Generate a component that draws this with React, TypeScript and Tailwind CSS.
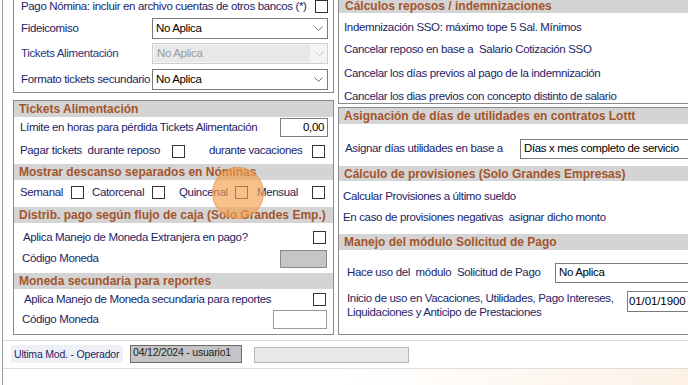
import React from "react";

const font = { fontFamily: '"Liberation Sans", Arial, sans-serif' };

function Check({ className = "" }: { className?: string }) {
  return <div className={`w-[13px] h-[13px] border border-[#333] bg-white shrink-0 ${className}`}></div>;
}

function Chevron({ muted = false }: { muted?: boolean }) {
  return (
    <svg width="9" height="6" viewBox="0 0 9 6" className="shrink-0">
      <polyline points="0.5,0.5 4.5,4.5 8.5,0.5" fill="none" stroke={muted ? "#c4c4c4" : "#707070"} strokeWidth="1" />
    </svg>
  );
}

function Select({ value, disabled = false, className = "" }: { value: string; disabled?: boolean; className?: string }) {
  if (disabled) {
    return (
      <div className={`h-[21px] flex items-stretch border border-[#cfcfcf] bg-[#f4f4f4] text-[#9c9c9c] ${className}`}>
        <span className="flex-1 flex items-center pl-[3px] bg-[#e8e8e8] m-[1px]">{value}</span>
        <span className="w-[16px] flex items-center justify-center">
          <Chevron muted />
        </span>
      </div>
    );
  }
  return (
    <div className={`h-[21px] flex items-center justify-between pl-[3px] pr-[4px] border border-[#7a7a7a] bg-white text-black ${className}`}>
      <span>{value}</span>
      <Chevron />
    </div>
  );
}

function Header({ title, className = "" }: { title: string; className?: string }) {
  return (
    <div className={`bg-[#d4d4d4] flex items-center pl-[5px] text-[12px] font-bold tracking-normal text-[#a4552c] ${className}`}>
      {title}
    </div>
  );
}

export default function App() {
  return (
    <div
      style={font}
      className="w-[688px] h-[385px] overflow-hidden bg-white relative text-[11.5px] tracking-[-0.35px] whitespace-nowrap text-[#1c2466] leading-none"
    >
      <div className="ml-[2px] h-full border-l border-[#9a9a9a] flex flex-col">
        <div className="flex pl-[10px] gap-[4px]">
          {/* Left column */}
          <div className="w-[321px] flex flex-col shrink-0">
            {/* Payroll options */}
            <div className="border-x border-b border-[#8a8a8a] pl-[7px] pr-[5px] pb-[2px] flex flex-col">
              <div className="h-[13px] flex items-center justify-between">
                <span>Pago Nómina: incluir en archivo cuentas de otros bancos (*)</span>
                <Check />
              </div>
              <div className="mt-[5px] h-[21px] flex items-center">
                <span className="w-[131px]">Fideicomiso</span>
                <Select value="No Aplica" className="w-[176px]" />
              </div>
              <div className="mt-[4px] h-[21px] flex items-center">
                <span className="w-[131px] text-[#2a3375]">Tickets Alimentación</span>
                <Select value="No Aplica" disabled className="w-[176px]" />
              </div>
              <div className="mt-[5px] h-[21px] flex items-center">
                <span className="w-[131px]">Formato tickets secundario</span>
                <Select value="No Aplica" className="w-[176px]" />
              </div>
            </div>

            {/* Tickets / descanso / moneda */}
            <div className="mt-[7px] border border-[#8a8a8a] pb-[5px] flex flex-col">
              <Header title="Tickets Alimentación" className="h-[16px]" />
              <div className="mt-[1px] h-[19px] flex items-center justify-between pl-[6px] pr-[5px]">
                <span>Límite en horas para pérdida Tickets Alimentación</span>
                <div className="w-[48px] h-[19px] border border-[#7a7a7a] bg-white text-black flex items-center justify-end pr-[3px]">0,00</div>
              </div>
              <div className="mt-[7px] h-[14px] flex items-center pl-[6px] pr-[7px]">
                <span className="w-[152px]">Pagar tickets&nbsp; durante reposo</span>
                <Check />
                <span className="ml-[24px] w-[103px]">durante vacaciones</span>
                <Check />
              </div>
              <Header title="Mostrar descanso separados en Nóminas" className="mt-[6px] h-[16px]" />
              <div className="mt-[6px] h-[13px] flex items-center pl-[6px] pr-[7px]">
                <span className="w-[51px]">Semanal</span>
                <Check />
                <span className="ml-[8px] w-[60px]">Catorcenal</span>
                <Check />
                <span className="ml-[14px] w-[56px]">Quincenal</span>
                <Check />
                <span className="ml-[9px] w-[55px]">Mensual</span>
                <Check />
              </div>
              <Header title="Distrib. pago según flujo de caja (Solo Grandes Emp.)" className="mt-[8px] h-[16px]" />
              <div className="mt-[8px] h-[13px] flex items-center justify-between pl-[9px] pr-[7px]">
                <span>Aplica Manejo de Moneda Extranjera en pago?</span>
                <Check />
              </div>
              <div className="mt-[6px] h-[18px] flex items-center justify-between pl-[8px] pr-[6px]">
                <span>Código Moneda</span>
                <div className="w-[47px] h-[18px] border border-[#8a8a8a] bg-[#c6c6c6]"></div>
              </div>
              <Header title="Moneda secundaria para reportes" className="mt-[5px] h-[16px]" />
              <div className="mt-[4px] h-[13px] flex items-center justify-between pl-[10px] pr-[7px]">
                <span>Aplica Manejo de Moneda secundaria para reportes</span>
                <Check />
              </div>
              <div className="mt-[4px] h-[19px] flex items-center justify-between pl-[8px] pr-[6px]">
                <span>Código Moneda</span>
                <div className="w-[54px] h-[19px] border border-[#9a9a9a] bg-white"></div>
              </div>
            </div>
          </div>

          {/* Right column */}
          <div className="w-[400px] flex flex-col shrink-0">
            <div className="border-x border-b border-[#8a8a8a] flex flex-col">
              <div className="bg-[#d4d4d4] h-[13px] pl-[6px] text-[12px] font-bold tracking-normal text-[#a4552c] leading-[12px]">
                Cálculos reposos / indemnizaciones
              </div>
              <div className="mt-[8px] h-[14px] flex items-center pl-[5px]">Indemnización SSO: máximo tope 5 Sal. Mínimos</div>
              <div className="mt-[8px] h-[14px] flex items-center pl-[5px]">Cancelar reposo en base a&nbsp; Salario Cotización SSO</div>
              <div className="mt-[10px] h-[14px] flex items-center pl-[5px]">Cancelar los días previos al pago de la indemnización</div>
              <div className="mt-[9px] h-[13px] flex items-center pl-[5px]">Cancelar los dias previos con concepto distinto de salario</div>
            </div>

            <div className="mt-[3px] border border-[#8a8a8a] pb-[22px] flex flex-col">
              <Header title="Asignación de días de utilidades en contratos Lottt" className="h-[16px] pl-[4px]" />
              <div className="mt-[15px] h-[20px] flex items-center pl-[6px]">
                <span className="w-[175px]">Asignar días utilidades en base a</span>
                <div className="h-[20px] flex-1 border border-[#7a7a7a] border-r-0 bg-white text-black flex items-center pl-[3px]">
                  Días x mes completo de servicio
                </div>
              </div>
              <Header title="Cálculo de provisiones (Solo Grandes Empresas)" className="mt-[7px] h-[15px] pl-[4px]" />
              <div className="mt-[9px] h-[14px] flex items-center pl-[4px]">Calcular Provisiones a último sueldo</div>
              <div className="mt-[7px] h-[14px] flex items-center pl-[4px]">En caso de provisiones negativas&nbsp; asignar dicho monto</div>
              <Header title="Manejo del módulo Solicitud de Pago" className="mt-[9px] h-[16px] pl-[4px]" />
              <div className="mt-[13px] h-[20px] flex items-center pl-[8px]">
                <span className="w-[208px]">Hace uso del&nbsp; módulo&nbsp; Solicitud de Pago</span>
                <div className="h-[20px] flex-1 border border-[#7a7a7a] border-r-0 bg-white text-black flex items-center pl-[3px]">
                  No Aplica
                </div>
              </div>
              <div className="mt-[8px] h-[21px] flex items-start pl-[8px]">
                <span className="w-[280px] leading-[14px]">
                  Inicio de uso en Vacaciones, Utilidades, Pago Intereses,
                  <br />
                  Liquidaciones y Anticipo de Prestaciones
                </span>
                <div className="h-[21px] flex-1 border border-[#7a7a7a] border-r-0 bg-white text-black flex items-center pl-[1px] text-[11.5px] tracking-[-0.1px]">
                  01/01/1900
                </div>
              </div>
            </div>
          </div>
        </div>

        {/* Footer */}
        <div className="mt-[5px] border-t border-[#dedede] pt-[4px] pb-[5px] border-b flex items-start pl-[8px]">
          <div className="w-[112px] h-[18px] bg-[#eef0f5] flex items-center pl-[3px] text-[10.5px] tracking-[-0.2px] text-[#1c2466]">
            Ultima Mod. - Operador
          </div>
          <div className="ml-[7px] w-[112px] h-[18px] bg-[#c4c4c4] border border-[#6b6b6b] pl-[2px] pt-[1px] text-[10.5px] tracking-[-0.2px] text-[#222]">
            04/12/2024 - usuario1
          </div>
          <div className="ml-[12px] mt-[2px] w-[155px] h-[16px] bg-[#e8e8e8] border border-[#b8b8b8]"></div>
        </div>
        <div className="flex-1 bg-gradient-to-r from-white via-white to-[#fdf1e6]"></div>
      </div>

      {/* cursor highlight */}
      <div className="absolute left-[212px] top-[167px] w-[52px] h-[52px] rounded-full bg-[#f3a04f]/65 border border-[#ef8f3a]/60"></div>
    </div>
  );
}
